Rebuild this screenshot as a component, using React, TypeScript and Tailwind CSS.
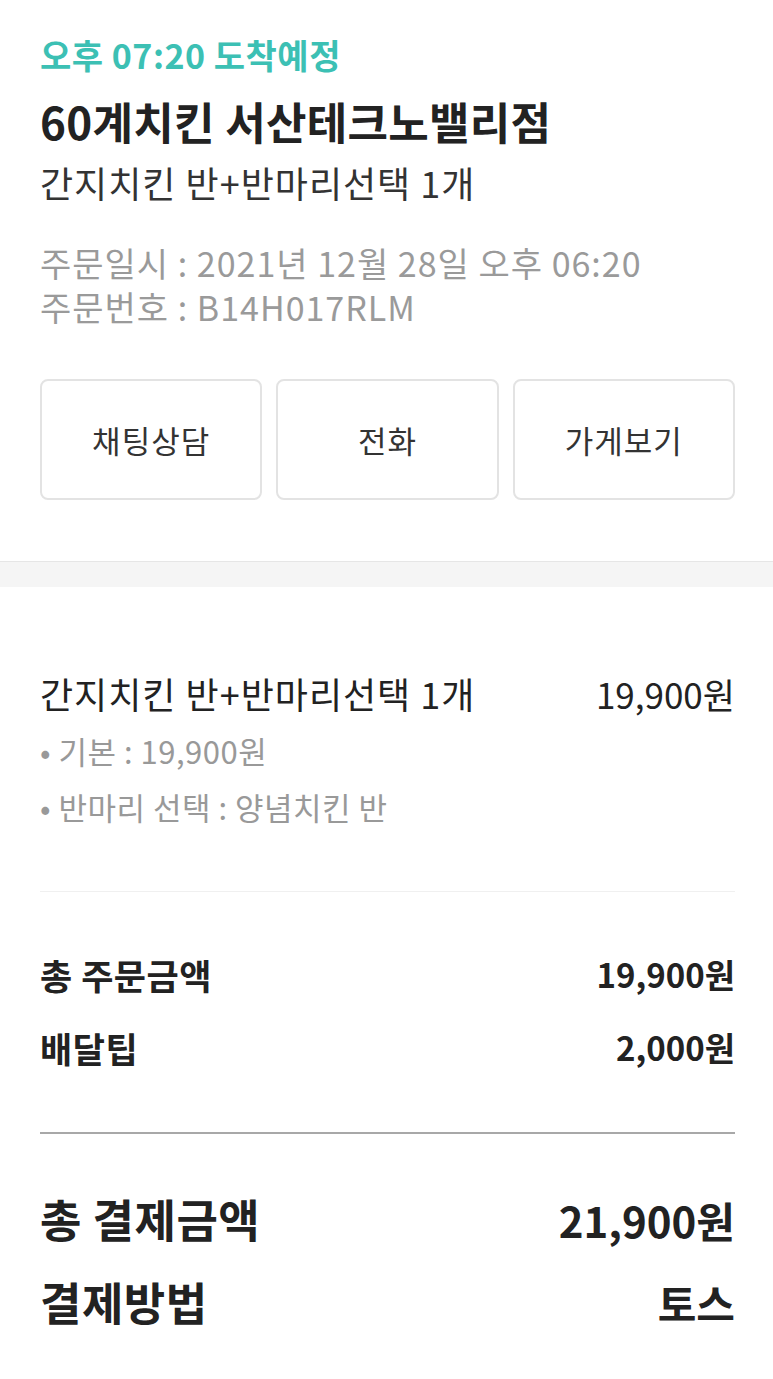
const font = { fontFamily: '"Noto Sans CJK KR", "Noto Sans", sans-serif' };

function ActionButton({ label }: { label: string }) {
  return (
    <button className="h-[121px] flex-1 rounded-[8px] border-2 border-[#e3e3e3] bg-white text-[31px] tracking-[1px] text-[#333] leading-none">
      {label}
    </button>
  );
}

function SumRow({
  label,
  value,
  big,
}: {
  label: string;
  value: string;
  big?: boolean;
}) {
  return (
    <div
      className={
        big
          ? "flex items-center justify-between h-[50px] font-bold text-[#222]"
          : "flex items-center justify-between h-[44px] font-bold text-[#222]"
      }
    >
      <span className={big ? "text-[45px] tracking-[0.5px]" : "text-[35px] tracking-[0.5px]"}>{label}</span>
      <span className={big ? "text-[42px]" : "text-[33px]"}>{value}</span>
    </div>
  );
}

export default function App() {
  return (
    <div className="w-[773px] min-h-[1379px] bg-white" style={font}>
      {/* order summary */}
      <div className="pl-[40px] pr-[38px] pt-[35px]">
        <p className="h-[40px] flex items-center text-[34px] tracking-[0.5px] font-bold text-[#3cc0b4] leading-none">
          오후 07:20 도착예정
        </p>
        <h1 className="mt-[21px] h-[50px] flex items-center text-[44px] tracking-[0.3px] font-bold text-[#222] leading-none">
          60계치킨 서산테크노밸리점
        </h1>
        <p className="mt-[16px] h-[40px] flex items-center text-[36px] tracking-[1px] text-[#333] leading-none">
          간지치킨 반+반마리선택 1개
        </p>
        <div className="mt-[39px] text-[34px] tracking-[1px] text-[#9a9a9a] leading-none">
          <p className="h-[44px] flex items-center">주문일시 : 2021년 12월 28일 오후 06:20</p>
          <p className="h-[44px] flex items-center">주문번호 : B14H017RLM</p>
        </div>
        <div className="mt-[50px] flex gap-[14px]">
          <ActionButton label="채팅상담" />
          <ActionButton label="전화" />
          <ActionButton label="가게보기" />
        </div>
      </div>

      <div className="mt-[61px] h-[26px] border-t border-[#e6e6e6] bg-[#f5f5f5]" />

      {/* menu */}
      <div className="pl-[40px] pr-[38px] pt-[84px]">
        <div className="flex items-center justify-between h-[44px] text-[#222] leading-none">
          <span className="text-[36px] tracking-[1px]">간지치킨 반+반마리선택 1개</span>
          <span className="text-[35px]">19,900원</span>
        </div>
        <div className="mt-[7px] text-[31px] tracking-[0.5px] text-[#999] leading-none">
          <p className="h-[56px] flex items-center">• 기본 : 19,900원</p>
          <p className="h-[56px] flex items-center">• 반마리 선택 : 양념치킨 반</p>
        </div>
        <div className="mt-[57px] h-px bg-[#f0f0f0]" />

        <div className="pt-[61px] flex flex-col gap-[29px]">
          <SumRow label="총 주문금액" value="19,900원" />
          <SumRow label="배달팁" value="2,000원" />
        </div>
        <div className="mt-[62px] h-[2px] bg-[#a8a8a8]" />

        <div className="pt-[60px] flex flex-col gap-[33px]">
          <SumRow label="총 결제금액" value="21,900원" big />
          <SumRow label="결제방법" value="토스" big />
        </div>
      </div>
    </div>
  );
}
